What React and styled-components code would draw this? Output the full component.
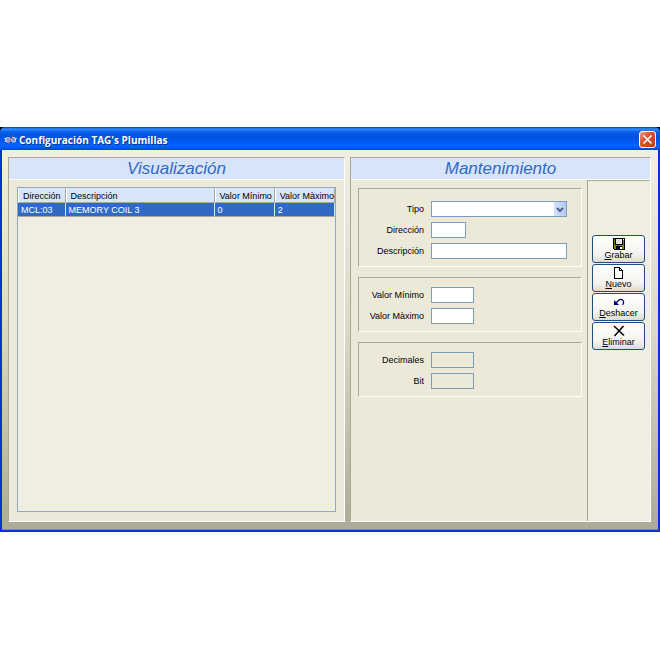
import React, { useState } from "react";
import styled, { createGlobalStyle, css } from "styled-components";

const GlobalStyle = createGlobalStyle`
    * {
        box-sizing: border-box;
    }

    body {
        margin: 0;
        background: #ffffff;
    }
`

const fontStyles = css`
    font-family: "Liberation Sans", sans-serif;
    font-size: 9px;
    line-height: 12px;
    color: #000000;
`

const Page = styled.main`
    padding-top: 127px;
`

const Window = styled.section`
    background: linear-gradient(#000000 8px, #0831d9 8px);
    ${fontStyles}
`

const TitleBar = styled.header`
    display: flex;
    align-items: center;
    gap: 2px;
    height: 23px;
    padding: 2px 4px 0 4px;
    border-radius: 5px 5px 0 0;
    background: linear-gradient(#0a3fb0 0, #2e8bff 2px, #0a5fe8 5px, #0053e1 9px, #0058ee 14px, #0066ff 19px, #0048d2 23px);
`

const Title = styled.h1`
    flex: 1;
    margin: 0;
    font-family: "Open Sans", sans-serif;
    font-weight: 700;
    font-size: 10px;
    line-height: 18px;
    color: #ffffff;
    text-shadow: 1px 1px 0 #0a318f;
`

const CloseButton = styled.button`
    display: flex;
    align-items: center;
    justify-content: center;
    width: 17px;
    height: 17px;
    padding: 0;
    border: 1px solid #ffffff;
    border-radius: 3px;
    background: linear-gradient(135deg, #f0a088, #e0512c 40%, #c83a12);
`

const Body = styled.div`
    display: grid;
    grid-template-columns: 337fr 301fr;
    gap: 5px;
    margin: 0 2px;
    padding: 7px 7px 7px 6px;
    background: linear-gradient(#f1efe3, #dedac9 45%, #aeaa9a);
    border-bottom: 1px solid #8c8a80;
`

const Frame = styled.div`
    padding-bottom: 2px;
`

const Panel = styled.section`
    display: flex;
    flex-direction: column;
    border: 1px solid;
    border-color: #aca899 #ffffff #ffffff #aca899;
    background: #ece9d8;
`

const PanelTitle = styled.h2`
    height: 22px;
    margin: 0;
    border-bottom: 1px solid #ffffff;
    background: #d8e4f8;
    font-family: "Liberation Sans", sans-serif;
    font-style: italic;
    font-weight: 400;
    font-size: 17px;
    line-height: 21px;
    text-align: center;
    color: #316ac5;
`

const GridArea = styled.div`
    display: flex;
    flex: 1;
    padding: 7px 8px 9px;
`

const GridBox = styled.div`
    flex: 1;
    min-height: 325px;
    padding: 0;
    border: 1px solid #8fa9c0;
    background: #f0eee1;
`

const Table = styled.table`
    width: 100%;
    table-layout: fixed;
    border-collapse: separate;
    border-spacing: 0;
`

const HeadCell = styled.th`
    width: ${props => props.$width};
    height: 15px;
    padding: 1px 0 0 4px;
    border-right: 1px solid #aca899;
    border-bottom: 1px solid #aca899;
    border-left: 1px solid #ffffff;
    background: #d8e4f8;
    font-weight: 400;
    text-align: left;
    white-space: nowrap;
`

const Cell = styled.td`
    height: 14px;
    padding: 0 0 0 3px;
    border-right: 1px solid #d8e4f8;
    border-bottom: 1px solid #aca899;
    background: #316ac5;
    color: #ffffff;
    white-space: nowrap;
`

const Editor = styled.div`
    display: flex;
    flex: 1;
`

const Form = styled.form`
    display: flex;
    flex: 1;
    flex-direction: column;
    gap: 10px;
    padding: 8px 5px 0 7px;
`

const Group = styled.div`
    display: flex;
    flex-direction: column;
    gap: 5px;
    padding: ${props => props.$top || "9px"} 14px 7px 0;
    border: 1px solid;
    border-color: #aca899 #ffffff #ffffff #aca899;
`

const Field = styled.div`
    display: grid;
    grid-template-columns: 65px 1fr;
    column-gap: 7px;
    align-items: center;
`

const Label = styled.label`
    text-align: right;
`

const controlStyles = css`
    width: ${props => props.$width || "100%"};
    height: 16px;
    margin: 0;
    padding: 0 3px;
    border: 1px solid #7f9db9;
    border-radius: 0;
    background: #ffffff;
    ${fontStyles}
    outline: none;

    &:disabled {
        background: #ece9d8;
    }
`

const Input = styled.input`
    ${controlStyles}
`

const Combo = styled.div`
    position: relative;
    display: flex;
`

const Select = styled.select`
    ${controlStyles}
    appearance: none;
`

const ComboArrow = styled.svg`
    position: absolute;
    top: 1px;
    right: 1px;
    width: 12px;
    height: 14px;
    background: linear-gradient(90deg, #d3e0fd, #b4c9f8);
    pointer-events: none;
`

const Toolbar = styled.div`
    display: flex;
    flex-direction: column;
    gap: 1px;
    width: 63px;
    padding: 54px 5px 0 4px;
    border-top: 1px solid #aca899;
    border-left: 1px solid #aca899;
    background: #f0eee1;
`

const ToolButton = styled.button`
    display: flex;
    flex-direction: column;
    align-items: center;
    justify-content: space-between;
    height: 28px;
    padding: 2px 0 1px;
    border: 1px solid #1d5080;
    border-radius: 3px;
    background: linear-gradient(#ffffff, #f4f3ee 70%, #dedbd0);
    font-family: "Liberation Sans", sans-serif;
    font-size: 9px;
    line-height: 11px;
    color: #000000;
`

const Caption = styled.span`
    display: block;

    &::first-letter {
        text-decoration: underline;
    }
`

const AppLogo = () => (
    <svg width="13" height="12" viewBox="0 0 13 12" fill="none" aria-hidden="true">
        <path d="M0 4.500h3M10 4.500h3M1.500 4v4M11.500 4v4" stroke="#a9c4f4" />
        <rect x="2" y="3.500" width="4" height="4.500" rx="1.500" fill="#7d8fc4" stroke="#d5daea" />
        <rect x="7.500" y="3.500" width="4" height="4.500" rx="1.500" fill="#7d8fc4" stroke="#d5daea" />
        <path d="M9.500 1L4 10.500" stroke="#b8606c" />
    </svg>
)

const CloseIcon = () => (
    <svg width="11" height="11" viewBox="0 0 11 11" aria-hidden="true">
        <path d="M1.500 1.500l8 8M9.500 1.500l-8 8" stroke="#ffffff" strokeWidth="1.700" />
    </svg>
)

const SaveIcon = () => (
    <svg width="12" height="12" viewBox="0 0 12 12" shapeRendering="crispEdges" aria-hidden="true">
        <path d="M0 0h12v12H1l-1-1z" fill="#000000" />
        <path d="M1 1h1v6h8V2h1v9H9V8H3v3H1z" fill="#808000" />
        <path d="M3 1h6v5H3z" fill="#e4e2dc" />
        <path d="M10 1h1v1h-1zM7 9h2v2H7z" fill="#ffffff" />
    </svg>
)

const NewIcon = () => (
    <svg width="12" height="12" viewBox="0 0 12 12" shapeRendering="crispEdges" aria-hidden="true">
        <path d="M1.500 .5h5l3 3v8h-8z" fill="#ffffff" stroke="#000000" />
        <path d="M6.500 .5v3h3" fill="none" stroke="#000000" />
    </svg>
)

const UndoIcon = () => (
    <svg width="12" height="12" viewBox="0 0 12 12" aria-hidden="true">
        <path d="M1 4v5h5z" fill="#000080" />
        <path d="M3 7l3-3q2-1.500 4 .5q1.500 2-.5 4.500" fill="none" stroke="#000080" strokeWidth="1.200" />
    </svg>
)

const DeleteIcon = () => (
    <svg width="12" height="12" viewBox="0 0 12 12" aria-hidden="true">
        <path d="M1 1l10 9.500" stroke="#000000" strokeWidth="1.500" />
        <path d="M10.500 1L1.500 11" stroke="#000000" strokeWidth="1.500" />
    </svg>
)

const columns = [
    { title: "Dirección", width: "15%" },
    { title: "Descripción", width: "47%" },
    { title: "Valor Mínimo", width: "19%" },
    { title: "Valor Màximo", width: "19%" },
]

const tags = [
    ["MCL:03", "MEMORY COIL 3", "0", "2"],
]

const actions = [
    { name: "Grabar", Icon: SaveIcon },
    { name: "Nuevo", Icon: NewIcon },
    { name: "Deshacer", Icon: UndoIcon },
    { name: "Eliminar", Icon: DeleteIcon },
]

const TextField = ({ id, label, width, disabled }) => {
    const [value, setValue] = useState("");

    return (
        <Field>
            <Label htmlFor={id}>{label}</Label>
            <Input
                id={id}
                $width={width}
                disabled={disabled}
                value={value}
                onChange={e => setValue(e.target.value)}
            />
        </Field>
    );
}

const TagTable = () => (
    <Table>
        <thead>
            <tr>
                {columns.map(c => <HeadCell key={c.title} $width={c.width}>{c.title}</HeadCell>)}
            </tr>
        </thead>
        <tbody>
            {tags.map(row => (
                <tr key={row[0]}>
                    {row.map((value, i) => <Cell key={i}>{value}</Cell>)}
                </tr>
            ))}
        </tbody>
    </Table>
)

const TagForm = () => (
    <Form>
        <Group $top="12px">
            <Field>
                <Label htmlFor="tipo">Tipo</Label>
                <Combo>
                    <Select id="tipo">
                        <option value=""></option>
                    </Select>
                    <ComboArrow viewBox="0 0 12 14" aria-hidden="true">
                        <path d="M3 6l3 3 3-3" fill="none" stroke="#4d6185" strokeWidth="2" />
                    </ComboArrow>
                </Combo>
            </Field>
            <TextField id="direccion" label="Dirección" width="35px" />
            <TextField id="descripcion" label="Descripción" />
        </Group>
        <Group>
            <TextField id="minimo" label="Valor Mínimo" width="43px" />
            <TextField id="maximo" label="Valor Màximo" width="43px" />
        </Group>
        <Group>
            <TextField id="decimales" label="Decimales" width="43px" disabled />
            <TextField id="bit" label="Bit" width="43px" disabled />
        </Group>
    </Form>
)

const App = () => {
    return (
        <>
            <GlobalStyle />
            <Page>
                <Window>
                    <TitleBar>
                        <AppLogo />
                        <Title>Configuración TAG's Plumillas</Title>
                        <CloseButton type="button" aria-label="Cerrar"><CloseIcon /></CloseButton>
                    </TitleBar>
                    <Frame>
                        <Body>
                            <Panel>
                                <PanelTitle>Visualización</PanelTitle>
                                <GridArea>
                                    <GridBox>
                                        <TagTable />
                                    </GridBox>
                                </GridArea>
                            </Panel>
                            <Panel>
                                <PanelTitle>Mantenimiento</PanelTitle>
                                <Editor>
                                    <TagForm />
                                    <Toolbar>
                                        {actions.map(({ name, Icon }) => (
                                            <ToolButton key={name} type="button">
                                                <Icon />
                                                <Caption>{name}</Caption>
                                            </ToolButton>
                                        ))}
                                    </Toolbar>
                                </Editor>
                            </Panel>
                        </Body>
                    </Frame>
                </Window>
            </Page>
        </>
    );
}

export default App;
